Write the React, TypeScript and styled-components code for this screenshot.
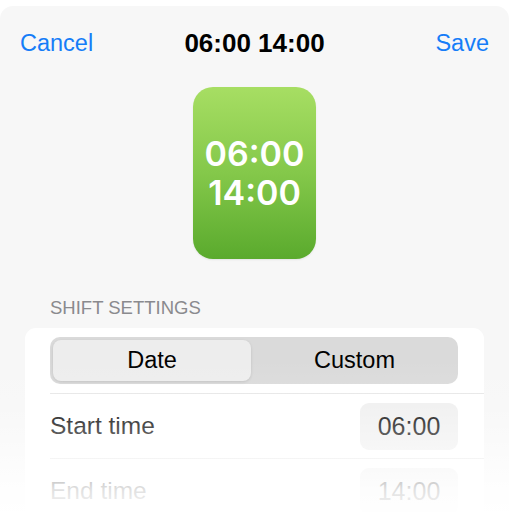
import React from "react";
import styled, { createGlobalStyle } from "styled-components";

const Global = createGlobalStyle`
  html, body { margin: 0; padding: 0; background: #ffffff; }
  body { font-family: "Liberation Sans", Arial, sans-serif; overflow: hidden; }
`;

const Screen = styled.div`
  position: relative;
  width: 509px;
  height: 512px;
  overflow: hidden;
  background: #ffffff;
`;

const Sheet = styled.div`
  margin-top: 6px;
  height: 520px;
  background: #f7f7f7;
  border-radius: 13px 13px 0 0;
  display: flex;
  flex-direction: column;
`;

const NavBar = styled.div`
  height: 74px;
  display: grid;
  grid-template-columns: 1fr auto 1fr;
  align-items: center;
  padding: 0 20px 0 20px;
  box-sizing: border-box;
`;

const NavButton = styled.span<{ $align: "left" | "right" }>`
  color: #167df8;
  font-size: 23.5px;
  justify-self: ${(p) => (p.$align === "left" ? "start" : "end")};
`;

const Title = styled.span`
  font-size: 26px;
  font-weight: 700;
  color: #000;
`;

const TileWrap = styled.div`
  display: flex;
  justify-content: center;
  padding-top: 7px;
`;

const Tile = styled.div`
  width: 123px;
  height: 172px;
  border-radius: 20px;
  background: linear-gradient(to bottom, #a7de63 0%, #84c84a 50%, #5aaa2d 100%);
  display: flex;
  flex-direction: column;
  align-items: center;
  justify-content: center;
  color: #fff;
  font-family: Inter, "Liberation Sans", sans-serif;
  font-size: 34px;
  font-weight: 600;
  line-height: 39px;
  box-shadow: 0 1px 2px rgba(0, 0, 0, 0.08);
`;

const SectionHeader = styled.div`
  margin-top: 38px;
  padding-left: 50px;
  font-size: 18.5px;
  color: #8a8a8e;
  line-height: 22px;
`;

const Card = styled.div`
  margin: 9px 25px 0 25px;
  background: #ffffff;
  border-radius: 11px;
  padding-left: 25px;
`;

const SegmentRow = styled.div`
  padding: 9px 26px 9px 0;
  border-bottom: 1px solid #e6e6e6;
`;

const Segmented = styled.div`
  height: 47px;
  border-radius: 10px;
  background: #dadada;
  display: grid;
  grid-template-columns: 1fr 1fr;
  padding: 3px;
  box-sizing: border-box;
`;

const Segment = styled.div<{ $active?: boolean }>`
  display: flex;
  align-items: center;
  justify-content: center;
  font-size: 23.5px;
  color: #000;
  border-radius: 8px;
  margin-right: ${(p) => (p.$active ? "3px" : "0")};
  background: ${(p) => (p.$active ? "#ededed" : "transparent")};
  box-shadow: ${(p) => (p.$active ? "0 1px 3px rgba(0,0,0,0.12)" : "none")};
`;

const Row = styled.div`
  height: 64px;
  display: flex;
  align-items: center;
  justify-content: space-between;
  padding-right: 26px;
  border-bottom: 1px solid #e6e6e6;
`;

const RowLabel = styled.span`
  font-size: 24.5px;
  color: #000;
`;

const TimeChip = styled.span`
  width: 98px;
  height: 47px;
  border-radius: 9px;
  background: #efefef;
  display: flex;
  align-items: center;
  justify-content: center;
  font-size: 25px;
  color: #000;
`;

const Fade = styled.div`
  position: absolute;
  left: 0;
  right: 0;
  top: 360px;
  bottom: 0;
  pointer-events: none;
  background: linear-gradient(
    to bottom,
    rgba(255, 255, 255, 0) 0%,
    rgba(255, 255, 255, 0.14) 30%,
    rgba(255, 255, 255, 0.4) 52%,
    rgba(255, 255, 255, 0.88) 85%,
    rgba(255, 255, 255, 0.97) 100%
  );
`;

export default function App() {
  return (
    <Screen>
      <Global />
      <Sheet>
        <NavBar>
          <NavButton $align="left">Cancel</NavButton>
          <Title>06:00 14:00</Title>
          <NavButton $align="right">Save</NavButton>
        </NavBar>
        <TileWrap>
          <Tile>
            <span>06:00</span>
            <span>14:00</span>
          </Tile>
        </TileWrap>
        <SectionHeader>SHIFT SETTINGS</SectionHeader>
        <Card>
          <SegmentRow>
            <Segmented>
              <Segment $active>Date</Segment>
              <Segment>Custom</Segment>
            </Segmented>
          </SegmentRow>
          <Row>
            <RowLabel>Start time</RowLabel>
            <TimeChip>06:00</TimeChip>
          </Row>
          <Row>
            <RowLabel>End time</RowLabel>
            <TimeChip>14:00</TimeChip>
          </Row>
        </Card>
      </Sheet>
      <Fade />
    </Screen>
  );
}
